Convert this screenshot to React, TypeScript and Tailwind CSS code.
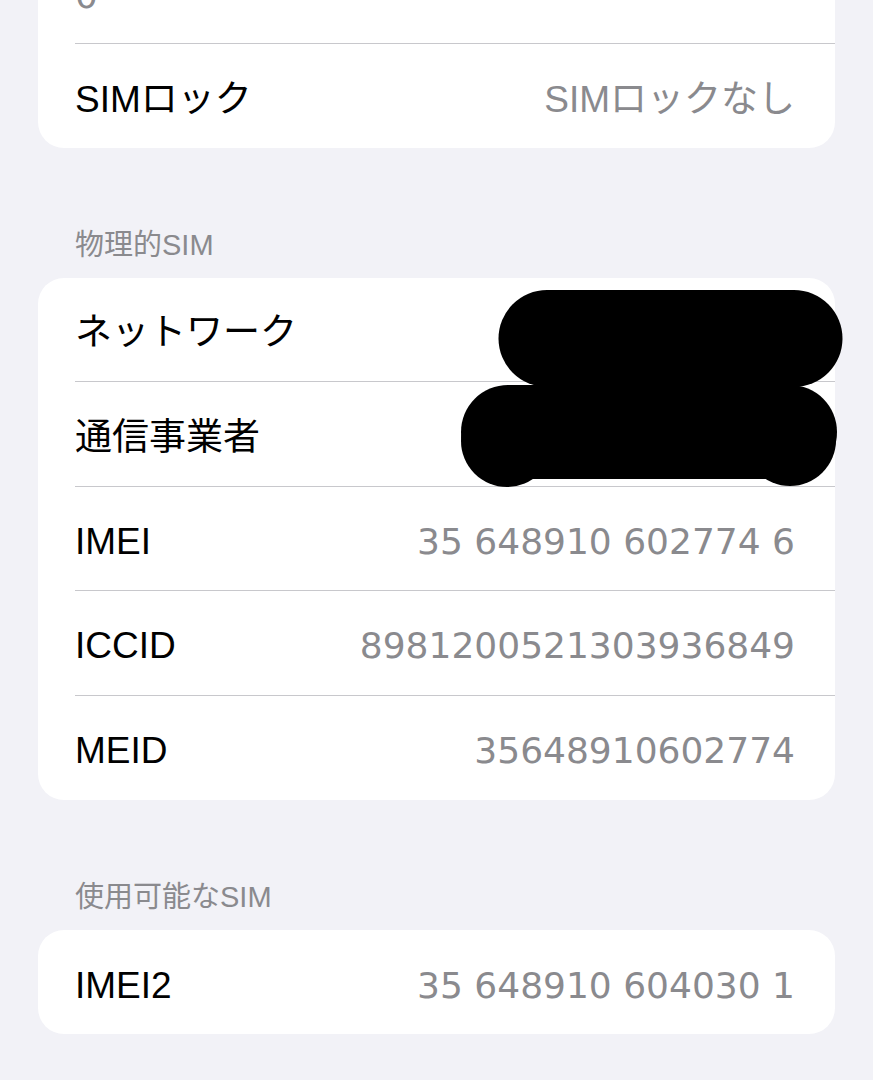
import React from "react";

type Row = {
  label: string;
  value?: string;
  digits?: boolean;
};

const physicalSim: Row[] = [
  { label: "ネットワーク" },
  { label: "通信事業者" },
  { label: "IMEI", value: "35 648910 602774 6", digits: true },
  { label: "ICCID", value: "8981200521303936849", digits: true },
  { label: "MEID", value: "35648910602774", digits: true },
];

const availableSim: Row[] = [
  { label: "IMEI2", value: "35 648910 604030 1", digits: true },
];

const sans = "font-['Liberation_Sans','Noto_Sans_CJK_JP',sans-serif]";
const digitsFont = "font-['DejaVu_Sans',sans-serif]";

const SettingRow = ({ row, last }: { row: Row; last: boolean }) => {
  return (
    <div className="pl-[37px]">
      <div
        className={`flex h-[104.4px] items-center justify-between pr-[40px] pt-[7px] ${
          last ? "" : "border-b border-[#c8c8cc]"
        }`}
      >
        <span className={`${sans} text-[37px] leading-[44px] text-black`}>{row.label}</span>
        {row.value && (
          <span
            className={`${row.digits ? `${digitsFont} text-[36px]` : `${sans} text-[37px]`} leading-[44px] text-[#8a8a8e]`}
          >
            {row.value}
          </span>
        )}
      </div>
    </div>
  );
};

const SectionHeader = ({ title }: { title: string }) => (
  <div className="flex h-[130px] items-end pb-[15px] pl-[75px]">
    <span className={`${sans} text-[29px] leading-[36px] text-[#8a8a8e]`}>{title}</span>
  </div>
);

const App: React.FC = () => {
  return (
    <div className="min-h-[1080px] overflow-hidden bg-[#f2f2f7]">
      {/* card scrolled partly off the top */}
      <div className="mx-[38px] mt-[-100px] rounded-[26px] bg-white">
        <div className="pl-[37px]">
          <div className="flex h-[144px] flex-col border-b border-[#c8c8cc] pb-[26px] pt-[30px]">
            <span className={`${sans} text-[37px] leading-[44px] text-black`}>EID</span>
            <span className={`${digitsFont} text-[36px] leading-[44px] text-[#8a8a8e]`}>0</span>
          </div>
        </div>
        <div className="pl-[37px]">
          <div className="flex h-[104px] items-center justify-between pr-[40px] pt-[8px]">
            <span className={`${sans} text-[37px] leading-[44px] text-black`}>SIMロック</span>
            <span className={`${sans} text-[37px] leading-[44px] text-[#8a8a8e]`}>SIMロックなし</span>
          </div>
        </div>
      </div>

      <SectionHeader title="物理的SIM" />
      <div className="relative mx-[38px] rounded-[26px] bg-white">
        {physicalSim.map((row, i) => (
          <SettingRow key={row.label} row={row} last={i === physicalSim.length - 1} />
        ))}
        {/* marker redaction over network / carrier values */}
        <svg className="pointer-events-none absolute left-0 top-0 overflow-visible" width="797" height="522">
          <line x1="509" y1="60.5" x2="756" y2="60.5" stroke="#000" strokeWidth="97" strokeLinecap="round" />
          <line x1="470" y1="154" x2="752" y2="154" stroke="#000" strokeWidth="94" strokeLinecap="round" />
          <circle cx="469" cy="163" r="46" fill="#000" />
          <circle cx="752" cy="162" r="46" fill="#000" />
        </svg>
      </div>

      <SectionHeader title="使用可能なSIM" />
      <div className="mx-[38px] rounded-[26px] bg-white">
        {availableSim.map((row, i) => (
          <SettingRow key={row.label} row={row} last={i === availableSim.length - 1} />
        ))}
      </div>
    </div>
  );
};

export default App;
